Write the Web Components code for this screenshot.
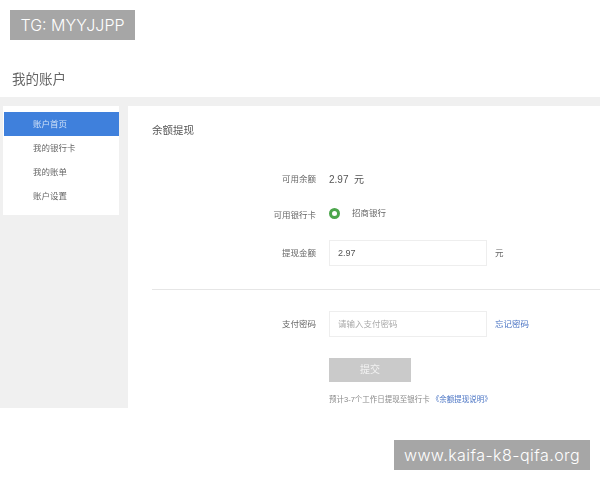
<!DOCTYPE html>
<html lang="zh">
<head>
<meta charset="utf-8">
<title>我的账户</title>
<style>
    html, body { margin: 0; padding: 0; background: #fff; }
    body {
        width: 600px;
        height: 480px;
        overflow: hidden;
        font-family: "Liberation Sans", "Noto Sans CJK SC", sans-serif;
        color: #555;
    }
</style>
</head>
<body>
<account-page>
    <nav-item slot="nav" active>账户首页</nav-item>
    <nav-item slot="nav">我的银行卡</nav-item>
    <nav-item slot="nav">我的账单</nav-item>
    <nav-item slot="nav">账户设置</nav-item>

    <form-row slot="top" label="可用余额" height="20" gap="15">
        <span class="balance">2.97&nbsp; 元</span>
    </form-row>
    <form-row slot="top" label="可用银行卡" height="20" gap="17" nudge="2">
        <bank-radio>招商银行</bank-radio>
    </form-row>
    <form-row slot="top" label="提现金额" height="26" gap="0" nudge="-2">
        <text-box value="2.97"></text-box>
        <span class="aside">元</span>
    </form-row>

    <form-row slot="bottom" label="支付密码" height="26" gap="0" nudge="-3">
        <text-box placeholder="请输入支付密码"></text-box>
        <a class="aside link">忘记密码</a>
    </form-row>
    <submit-block slot="bottom"></submit-block>
</account-page>
<water-mark style="left:10px;top:10px;width:125px">TG: MYYJJPP</water-mark>
<water-mark style="left:394px;top:440px;width:196px;letter-spacing:0.45px">www.kaifa-k8-qifa.org</water-mark>

<script>
class AccountPage extends HTMLElement {
    constructor() {
        super();
        this.attachShadow({ mode: 'open' });
        this.shadowRoot.innerHTML = `
            <style>
                :host {
                    display: block;
                    width: 600px;
                    font-family: "Liberation Sans", "Noto Sans CJK SC", sans-serif;
                    filter: blur(0.6px);
                }
                header {
                    height: 97px;
                    box-sizing: border-box;
                    padding: 70px 0 0 12px;
                    font-size: 13.5px;
                    line-height: 19px;
                    color: #666;
                }
                .body {
                    height: 311px;
                    background: #f0f0f0;
                    padding-top: 9px;
                    box-sizing: border-box;
                    display: flex;
                }
                aside {
                    width: 128px;
                    flex: none;
                    box-sizing: border-box;
                    padding-left: 3px;
                }
                .menu {
                    width: 116px;
                    height: 109px;
                    box-sizing: border-box;
                    background: #fff;
                    padding: 6px 0 0 1px;
                }
                main {
                    flex: 1;
                    background: #fff;
                    box-sizing: border-box;
                    padding: 16px 0 0 24px;
                }
                h2 {
                    margin: 0;
                    font-size: 10.5px;
                    font-weight: 400;
                    line-height: 16px;
                    color: #555;
                }
                .top {
                    display: flex;
                    flex-direction: column;
                    margin-top: 30px;
                }
                hr {
                    border: 0;
                    border-top: 1px solid #e6e6e6;
                    margin: 23px 0 21px;
                }
            </style>
            <header>我的账户</header>
            <div class="body">
                <aside><div class="menu"><slot name="nav"></slot></div></aside>
                <main>
                    <h2>余额提现</h2>
                    <div class="top"><slot name="top"></slot></div>
                    <hr>
                    <slot name="bottom"></slot>
                </main>
            </div>
        `;
    }
}

class NavItem extends HTMLElement {
    constructor() {
        super();
        this.attachShadow({ mode: 'open' });
        this.shadowRoot.innerHTML = `
            <style>
                :host {
                    display: block;
                    height: 24px;
                    line-height: 24px;
                    padding-left: 29px;
                    font-size: 8.5px;
                    color: #666;
                }
                :host([active]) {
                    background: #3f80dc;
                    color: #cfe0f7;
                }
            </style>
            <slot></slot>
        `;
    }
}

class FormRow extends HTMLElement {
    constructor() {
        super();
        this.attachShadow({ mode: 'open' });
        this.shadowRoot.innerHTML = `
            <style>
                :host {
                    display: flex;
                    align-items: center;
                    font-size: 8.5px;
                    color: #666;
                }
                .label {
                    width: 164px;
                    flex: none;
                    text-align: right;
                    margin-right: 13px;
                }
                .value { display: flex; align-items: center; }
                ::slotted(.balance) { font-size: 10px; color: #555; }
                ::slotted(.aside) { margin-left: 8px; padding-bottom: 3px; font-size: 8.5px; color: #666; }
                ::slotted(.link) { color: #4a74c4; }
            </style>
            <div class="label"></div>
            <div class="value"><slot></slot></div>
        `;
    }

    connectedCallback() {
        const label = this.shadowRoot.querySelector('.label');
        label.textContent = this.getAttribute('label');
        // labels sit a little off centre in the reference, padding moves them
        const nudge = Number(this.getAttribute('nudge') || 0);
        if (nudge > 0) label.style.paddingTop = nudge + 'px';
        if (nudge < 0) label.style.paddingBottom = -nudge + 'px';
        this.style.height = this.getAttribute('height') + 'px';
        this.style.marginBottom = (this.getAttribute('gap') || 0) + 'px';
    }
}

class BankRadio extends HTMLElement {
    constructor() {
        super();
        this.attachShadow({ mode: 'open' });
        this.shadowRoot.innerHTML = `
            <style>
                :host {
                    display: flex;
                    align-items: center;
                    font-size: 8.5px;
                    color: #666;
                }
                svg { margin-right: 12px; display: block; }
                span { padding-bottom: 2px; }
            </style>
            <svg width="11" height="11" viewBox="0 0 11 11">
                <circle cx="5.5" cy="5.5" r="4" fill="#fff" stroke="#4ca64c" stroke-width="3"/>
            </svg>
            <span><slot></slot></span>
        `;
    }
}

class TextBox extends HTMLElement {
    constructor() {
        super();
        this.attachShadow({ mode: 'open' });
        this.shadowRoot.innerHTML = `
            <style>
                :host { display: block; }
                input {
                    display: block;
                    width: 158px;
                    height: 26px;
                    box-sizing: border-box;
                    border: 1px solid #eeeeee;
                    padding: 0 8px 1px 8px;
                    margin: 0;
                    outline: none;
                    font: 9px "Liberation Sans", "Noto Sans CJK SC", sans-serif;
                    color: #555;
                    background: #fff;
                }
                input::placeholder { color: #aaa; opacity: 1; font-size: 8.5px; }
            </style>
            <input type="text">
        `;
    }

    connectedCallback() {
        const input = this.shadowRoot.querySelector('input');
        input.value = this.getAttribute('value') || '';
        input.placeholder = this.getAttribute('placeholder') || '';
    }
}

class SubmitBlock extends HTMLElement {
    constructor() {
        super();
        this.attachShadow({ mode: 'open' });
        this.shadowRoot.innerHTML = `
            <style>
                :host {
                    display: block;
                    padding: 21px 0 0 177px;
                }
                .btn {
                    width: 82px;
                    height: 24px;
                    line-height: 24px;
                    text-align: center;
                    background: #cacaca;
                    color: #f2f2f2;
                    font-size: 10px;
                }
                p {
                    margin: 12px 0 0;
                    font-size: 7.5px;
                    line-height: 12px;
                    color: #8a8a8a;
                    white-space: nowrap;
                }
                a { color: #4a74c4; margin-left: 2px; }
            </style>
            <div class="btn">提交</div>
            <p>预计3-7个工作日提现至银行卡<a>《余额提现说明》</a></p>
        `;
    }
}

class WaterMark extends HTMLElement {
    constructor() {
        super();
        this.attachShadow({ mode: 'open' });
        this.shadowRoot.innerHTML = `
            <style>
                :host {
                    position: absolute;
                    height: 30px;
                    line-height: 30px;
                    text-align: center;
                    background: #a6a6a6;
                    color: #fff;
                    font-family: Inter, "Liberation Sans", sans-serif;
                    font-weight: 300;
                    font-size: 16px;
                    white-space: nowrap;
                }
            </style>
            <slot></slot>
        `;
    }
}

customElements.define('account-page', AccountPage);
customElements.define('nav-item', NavItem);
customElements.define('form-row', FormRow);
customElements.define('bank-radio', BankRadio);
customElements.define('text-box', TextBox);
customElements.define('submit-block', SubmitBlock);
customElements.define('water-mark', WaterMark);
</script>
</body>
</html>
